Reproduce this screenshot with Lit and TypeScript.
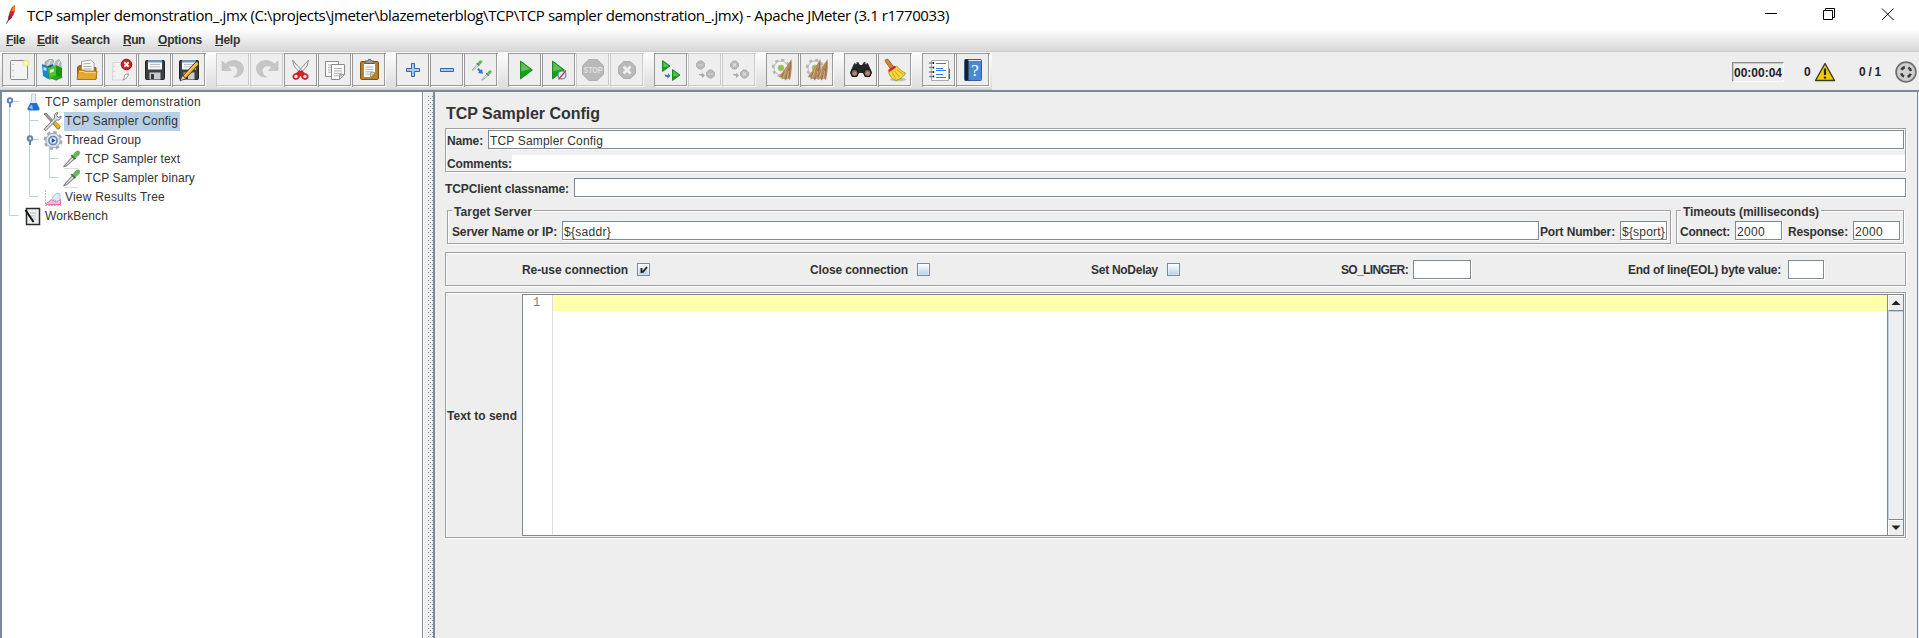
import { LitElement, html, css, svg } from "lit";
import { customElement, property } from "lit/decorators.js";

/* A label that spreads its letters to take up a given width. */
@customElement("fit-label")
class FitLabel extends LitElement {
  @property({ type: Number }) w = 0;
  static styles = css`
    :host { display: inline-block; white-space: pre; flex: none; }
    span { display: inline-block; white-space: pre; }
  `;
  render() {
    return html`<span><slot></slot></span>`;
  }
  firstUpdated() {
    const s = this.renderRoot.querySelector("span") as HTMLElement;
    const n = (this.textContent || "").length;
    const nat = s.getBoundingClientRect().width;
    if (n && nat) s.style.letterSpacing = `${(this.w - nat) / n}px`;
    this.style.width = `${this.w}px`;
  }
}

const page = (x: number, y: number, w: number, h: number) => svg`
  <path d="M${x} ${y}h${w}v${h - 5}l-5 5h${5 - w}z" fill="#fafafa" stroke="#8a8c88"/>
  <path d="M${x + w} ${y + h - 5}h-5v5z" fill="#ddd" stroke="#8a8c88" stroke-width=".8"/>`;
const lines = (x: number, y: number, w: number, n: number) =>
  svg`<path d="${Array.from({ length: n }, (_, i) => `M${x} ${y + i * 2.4}h${w}`).join("")}" stroke="#b0b0b0" fill="none"/>`;
const floppy = svg`
  <rect x="6.5" y="6.5" width="19" height="19" rx="1" fill="#3c3f44" stroke="#222"/>
  <rect x="9" y="6.5" width="14" height="9" fill="#f4f6f8"/>
  <rect x="9" y="6" width="14" height="2.4" fill="#6e93bd"/>
  <path d="M11 10.5h10M11 12.8h10" stroke="#b9bcc0"/>
  <rect x="10.5" y="18.5" width="11" height="7" fill="#c9cbcd"/>
  <rect x="12" y="20" width="3" height="5" fill="#34373b"/>`;
const octagon = (x: number, y: number, s: number) => {
  const a = s * 0.3;
  const b = s - 2 * a;
  return svg`<path d="M${x + a} ${y}h${b}l${a} ${a}v${b}l${-a} ${a}h${-b}l${-a} ${-a}v${-b}z" fill="#b9b9b9" stroke="#b0b0b0"/>`;
};
const tri = (x: number, y: number, w: number, h: number) =>
  svg`<path d="M${x} ${y}l${w} ${h / 2}l${-w} ${h / 2}z" fill="#14a314" stroke="#0d7a12" stroke-width=".8"/><path d="M${x + 0.8} ${y + 1.5}l${w * 0.75} ${h * 0.38}l${-w * 0.75} ${h * 0.1}z" fill="#5cc05c"/>`;
const gear = (cx: number, cy: number) => svg`
  <circle cx="${cx}" cy="${cy}" r="8" fill="none" stroke="#b4b6b3" stroke-width="2.4" stroke-dasharray="3.2 3.08"/>
  <circle cx="${cx}" cy="${cy}" r="7" fill="#f2f3f1" stroke="#b4b6b3"/>
  <circle cx="${cx}" cy="${cy}" r="3" fill="#8cc93a" stroke="#b6b8b5"/>`;
const brush = (x: number) => svg`
  <path d="M${x + 13} 5L${x + 7} 14L${x} 23l3 .5v2l2.500 -1l1.500 2l2-2l2.500 1.500l1-5l.8-7z" fill="#b38b5d"/>
  <path d="M${x + 9} 14L${x + 3} 23M${x + 11} 14L${x + 7} 25M${x + 12.5} 8L${x + 10.5} 23" stroke="#8f6b42" stroke-width=".8"/>
  <path d="M${x + 8} 14L${x + 5} 23M${x + 10} 17L${x + 9} 24" stroke="#dbbb8d" stroke-width=".8"/>`;
const dropper = (x: number, y: number, k: number) => svg`
  <g transform="translate(${x} ${y}) scale(${k})">
    <path d="M1 17L9.500 7.500l2.200 2.200L3 17.500L.5 18z" fill="#eceeec" stroke="#7c7f7c" stroke-width="1.100"/>
    <path d="M8.500 5.500l4.500 4.500" stroke="#2f7a2b" stroke-width="2"/>
    <path d="M10.500 6C12 3 14 .5 16.500 1.200C19 2.500 17 6 13 8.500z" fill="#6cb862" stroke="#4a9445" stroke-width=".7"/>
  </g>`;
const undo = svg`<path d="M5 7v9.500h9.500l-3.200-3.200c3.500-2.800 9-1.500 9.500 3c.3 3-1.500 5.500-4.500 6.700c5 .5 10-2.300 10.200-8.200C26.700 7.500 17 3 8.300 10z" fill="#c6c6c6" stroke="#bbb" stroke-width=".6"/>`;

const icons: Record<string, unknown> = {
  new: svg`<rect x="7.500" y="6.500" width="17" height="19" rx="1" fill="#f3f3f3" stroke="#8a8c88"/>
    <path d="M10 10v1M10 16v1M10 22v1" stroke="#999"/>
    <circle cx="23" cy="9" r="3.500" fill="#f5ec80" opacity=".75"/><circle cx="23" cy="9" r="1.700" fill="#fffde0"/>`,
  templates: svg`<path d="M8 8l4-2.500h4l1 3l5-3l2 3v8H8z" fill="#b9bebe" stroke="#8c9292" stroke-width=".7"/>
    <path d="M10 12l4-6M15 12l4-6M20 12l3-5" stroke="#e8ecec"/>
    <path d="M5 10l6 2v13l-5-3z" fill="#1689cf"/><path d="M11 12l5-2v12l-5 3z" fill="#0b5fa5"/>
    <path d="M6.500 13l3 1v3l-3-1z" fill="#bfe3f7"/>
    <path d="M11 14l8-3v12l-7 3z" fill="#4cc234"/><path d="M19 11l6 3v9l-6 3.500z" fill="#1f8f1c"/>
    <path d="M19 26.500L12 24l7-2.500l7 2z" fill="#2ba223"/><path d="M13 16l4-1.500v3l-4 1.500z" fill="#d7f3cd"/>`,
  open: svg`<path d="M6.500 25V13l2-1.500h5l1.500 2h10V25z" fill="#a87010" stroke="#8d5a08"/>
    <path d="M10.500 17V7.500l9-1.500l3.500 3v9z" fill="#f8f8f8" stroke="#8c8c8c" stroke-width=".8"/>
    <path d="M12.500 10l7-.8M12.500 12.500h8M12.500 15h8" stroke="#aaa"/>
    <path d="M6 25.500L7.500 16h5l2 1h11.500L25 25.500z" fill="#e5a82c" stroke="#a06c10" stroke-width=".8"/>
    <path d="M8 17.500h4.500l1.500 1h11" stroke="#f6d27a" fill="none"/>`,
  close: svg`<path d="M8 8.500h15v13l-4.500 4.500H7.500z" fill="#f3f3f3" stroke="#d6d6d6"/>
    <path d="M23.500 20c-2 0-4 .5-4 1.500c0 1.500-.5 3-1.500 4.500c3-1 5-3 5.500-6z" fill="#fafafa" stroke="#888" stroke-width=".8"/>
    <path d="M9 12v1M9 17v1M9 22v1" stroke="#bbb"/>
    <circle cx="21.500" cy="10.500" r="5.300" fill="#c8201c" stroke="#931210"/>
    <path d="M19.300 8.300l4.400 4.400M23.700 8.300l-4.400 4.400" stroke="#fff" stroke-width="2"/>`,
  save: floppy,
  saveas: svg`${floppy}<path d="M24.500 9L11 23.500" stroke="#403005" stroke-width="4.600"/><path d="M24.500 9L11.500 23" stroke="#f2b52e" stroke-width="3"/>
    <path d="M24 8.500L11.500 21.500" stroke="#fbe08c" stroke-width=".9"/><path d="M9.500 21.500l3.500 3L7 27z" fill="#e9cfa0" stroke="#333" stroke-width=".7"/>`,
  undo,
  redo: svg`<g transform="translate(32 0) scale(-1 1)">${undo}</g>`,
  cut: svg`<path d="M7.500 6L9 12l7 8l2-2zM23.500 6L22 12l-7 8l-2-2z" fill="#f3f3f3" stroke="#858585" stroke-width=".9"/>
    <path d="M14 17l3 0l3 2.500c4 0 4.500 6 0 6c-3 0-3.500-3-4.500-4.500c-1 1.500-1.500 4.500-4.500 4.500c-4.500 0-4-6 0-6z" fill="#d71f26" stroke="#a50e12" stroke-width=".6"/>
    <circle cx="11" cy="22.500" r="1.700" fill="#eee"/><circle cx="20" cy="22.500" r="1.700" fill="#eee"/>`,
  copy: svg`${page(6.5, 7.5, 13, 15)}${lines(9, 11, 8, 4)}${page(12.5, 10.5, 13, 15)}${lines(15, 14.5, 8, 4)}`,
  paste: svg`<rect x="7.500" y="7.500" width="18" height="18" rx="1.200" fill="#b97d2a" stroke="#80500c"/>
    ${page(10.5, 9.5, 12, 14)}${lines(12.5, 13, 8, 4)}<path d="M12 9.500V7h2.500l1-1.500h2l1 1.500H21v2.500z" fill="#999c97" stroke="#5b5d59"/>`,
  plus: svg`<path d="M14.500 9.500h3v5h5v3h-5v5h-3v-5h-5v-3h5z" fill="#a9c8ea" stroke="#3465a4"/>`,
  minus: svg`<path d="M9.500 14.500h13v3h-13z" fill="#a9c8ea" stroke="#3465a4"/>`,
  toggle: svg`${dropper(7, 6, 0.56)}${dropper(16.5, 16, 0.56)}<path d="M13.500 14l2.300 2.300l1.200-1.300l1 4.800l-5-.8l1.200-1.300l-2-2z" fill="#2b7ae0"/>`,
  play: tri(11.5, 7, 12, 18),
  playno: svg`${tri(9.5, 7, 12, 18)}<circle cx="19" cy="21" r="4" fill="#dfe8f5" stroke="#5e82b5" stroke-width="1.200"/><path d="M15.500 25.500L23 16.500" stroke="#d33" stroke-width="1.200"/>`,
  stop: svg`${octagon(5.5, 5.5, 21)}<text x="6.5" y="19.300" style="font:bold 9px 'Liberation Sans',sans-serif" textLength="19" lengthAdjust="spacingAndGlyphs" fill="#e2e2e2">STOP</text>`,
  shutdown: svg`${octagon(7.5, 7.5, 17)}<path d="M12.500 12.500l7 7M19.500 12.500l-7 7" stroke="#f0f0f0" stroke-width="2.800"/>`,
  rstart: svg`${tri(7.5, 6.5, 7.5, 11)}${tri(17.5, 15.5, 7.5, 11)}<path d="M9.500 20l2 1h1.500v-2l2.500 3l-3 2.500v-1.500h-2z" fill="#4a74bd"/>`,
  rstop: svg`${octagon(7.5, 7, 8)}${octagon(17.5, 16, 8)}<path d="M9 11h5M19 20h5" stroke="#ccc" stroke-width="1.500"/><path d="M10 20h3v-1.500l3 3l-3 2.500v-2l-3-1z" fill="#aaa"/>`,
  rshut: svg`${octagon(7.5, 7, 8)}${octagon(17.5, 16, 8)}<path d="M10 9.500l3 3M13 9.500l-3 3M20 18.500l3 3M23 18.500l-3 3" stroke="#ddd" stroke-width="1.300"/><path d="M10 20h3v-1.500l3 3l-3 2.500v-2l-3-1z" fill="#aaa"/>`,
  clear: svg`${gear(14, 14)}${brush(11.5)}`,
  clearall: svg`${gear(14, 14)}${brush(6.5)}${brush(13.5)}`,
  search: svg`<path d="M9 9.500l4-1.500l2 3h2l2-3l4 1.500l4 9l-2 4.500h-5l-2-4h-4l-2 4H7l-2-4.500z" fill="#262626"/>
    <path d="M10 10l2-1M22 10l-2-1" stroke="#aaa" stroke-width="1.300"/>
    <circle cx="9.500" cy="19" r="3.600" fill="#6b6b6b" stroke="#111"/><circle cx="22.500" cy="19" r="3.600" fill="#6b6b6b" stroke="#111"/>
    <circle cx="9.800" cy="19.500" r="1.900" fill="#c88464"/><circle cx="22.800" cy="19.500" r="1.900" fill="#c88464"/>`,
  broom: svg`<ellipse cx="19" cy="25.500" rx="8" ry="1.700" fill="#bbb"/>
    <path d="M6 7c0-2 3-2.500 4-.5l5 7l-3 2z" fill="#c98a3c" stroke="#8d5713" stroke-width=".8"/>
    <path d="M9.500 17.500l8-5.500C21 16 24 18 26.500 19l-1.500 2.500l-2 2l-2.500 1.500l-3.500 1.500c-4-2-6.500-4-7.500-9z" fill="#f2d63c" stroke="#a98c0c" stroke-width=".8"/>
    <path d="M13 18l4 7M15.500 17l5 6M18 15.500l6 5" stroke="#c2a118" stroke-width=".8"/>
    <path d="M9 16l6.500-4.500l1.500 2l-6.500 4.500z" fill="#d3232a"/>`,
  notes: svg`<path d="M25.500 14.500h1.500v5h-1.500z" fill="#1d7ff0"/><path d="M25.500 20h1.500v5h-1.500z" fill="#0c8c14"/>
    <path d="M8.500 6.500h17v20h-17z" fill="#fdfdfd" stroke="#aaa"/>
    <path d="M6 9h4M6 13.500h4M6 18h4M6 22.500h4" stroke="#888" stroke-width="1.600"/><path d="M10.500 8v2M10.500 12.500v2M10.500 17v2M10.500 21.500v2" stroke="#222" stroke-width="1.300"/>
    <path d="M13 9.500h10M13 14.500h7M13 16.500h10M13 20.500h7M13 23.500h10" stroke="#2a7ff0"/>`,
  help: svg`<rect x="7.500" y="5.500" width="17" height="21" rx="1" fill="#4a88d6" stroke="#345f9a"/><path d="M8 5.500h3.500v21H8z" fill="#1d1d1f"/>
    <path d="M11.500 6.500h12.500" stroke="#dde6f2"/><text x="18" y="22" text-anchor="middle" font-family="Liberation Serif" font-size="17" fill="#fff">?</text>`,
};

const tools: [string, boolean?][][] = [
  [["new"], ["templates"], ["open"], ["close"], ["save"], ["saveas"]],
  [["undo", true], ["redo", true], ["cut"], ["copy"], ["paste"]],
  [["plus"], ["minus"], ["toggle"]],
  [["play"], ["playno"], ["stop", true], ["shutdown", true]],
  [["rstart"], ["rstop", true], ["rshut", true]],
  [["clear"], ["clearall"]],
  [["search"], ["broom"]],
  [["notes"], ["help"]],
];

const menus: [string, boolean, number, number][] = [
  ["File", true, 19, 12],
  ["Edit", true, 21, 13],
  ["Search", false, 39, 13],
  ["Run", true, 22, 13],
  ["Options", true, 44, 13],
  ["Help", true, 25, 0],
];

const treeIcons: Record<string, unknown> = {
  flask: svg`<path d="M9.500 1h4v7l4 7.500q.5 2-1.500 2H7q-2 0-1.500-2L9.500 8z" fill="#e9eef4" stroke="#b9c0c9" stroke-width=".8"/>
    <path d="M8.300 10h6.400l2.600 5.500q.3 1.800-1.500 1.800H7.200q-1.800 0-1.500-1.800z" fill="#1c70cf"/><path d="M7 15q1.500-3 3-3.500l1 5z" fill="#8fc2f5"/>`,
  config: svg`<path d="M2 2l2-1l14 15l-2.500 1z" fill="#9a9d9e" stroke="#555" stroke-width=".6"/><path d="M10.500 10.500l2-2l6 5.500l-2.500 3.500z" fill="#e7b21c" stroke="#94700b" stroke-width=".6"/>
    <path d="M2 17.500L12.500 6c-.8-3 1-5.500 3.500-5.500L14.500 3.500l2 2l2.500-1.500c.5 3-2 4.700-4.500 4L4 18.500z" fill="#d6d8d9" stroke="#606364" stroke-width=".8"/>`,
  thread: svg`<circle cx="11" cy="9.500" r="8.300" fill="none" stroke="#a4a9b0" stroke-width="2.200" stroke-dasharray="3.600 2.920"/><circle cx="11" cy="9.500" r="7.200" fill="#dfe2e6" stroke="#a4a9b0"/>
    <circle cx="11" cy="9.500" r="4" fill="#eef2f7" stroke="#5a87bd" stroke-width="1.600"/><path d="M9.700 7l4 2.500l-4 2.500z" fill="#1d4f94"/>`,
  dropper: svg`${dropper(1.5, 0, 0.92)}<path d="M2 18.500h14" stroke="#ddd"/>`,
  results: svg`<path d="M3.500 2v15.500H19" stroke="#b9bec6" fill="none" stroke-dasharray="2 1"/><path d="M4.500 15.500l5-4l4 2l5-2v5h-14z" fill="#f6b6d3" stroke="#e0559a" stroke-width=".8"/>
    <path d="M10 10l4-4.500h4v6l-3 2z" fill="#dcebfa" stroke="#8fbcea" stroke-width=".8"/>`,
  bench: svg`<rect x="4.500" y="1.500" width="13" height="16" fill="#eceef0" stroke="#2c2c2c" stroke-width="1.500"/><path d="M8 6h6M8 9h6M8 12h6" stroke="#b8bdc2"/>
    <path d="M3.500 3L11.500 15" stroke="#111" stroke-width="2"/>`,
};

const tree: [string, number, string, number, boolean?][] = [
  ["TCP sampler demonstration", 0, "flask", 156],
  ["TCP Sampler Config", 1, "config", 113, true],
  ["Thread Group", 1, "thread", 76],
  ["TCP Sampler text", 2, "dropper", 95],
  ["TCP Sampler binary", 2, "dropper", 110],
  ["View Results Tree", 1, "results", 100],
  ["WorkBench", 0, "bench", 63],
];

@customElement("app-root")
class AppRoot extends LitElement {
  static styles = css`
    :host { display: block; height: 638px; overflow: hidden; background: #eee; color: #333; font: 12px/14px "Liberation Sans", Arial, sans-serif; }
    * { box-sizing: border-box; }
    svg { display: block; overflow: visible; flex: none; }
    .b { font-weight: bold; }
    .title { display: flex; align-items: center; height: 29px; background: #fff; color: #000; font: 15px/20px "Open Sans", sans-serif; }
    .title .feather { margin-left: 5px; margin-right: 6px; }
    .title .win { display: flex; margin-left: auto; }
    .menu { display: flex; height: 23px; padding: 4px 0 0 6px; background: linear-gradient(#fff, #dadada 92%); border-bottom: 1px solid #ccc; font-weight: bold; color: #333; }
    .menu u { text-decoration: none; border-bottom: 1px solid #333; display: inline-block; line-height: 12px; height: 12px; }
    .bar { display: flex; height: 38px; }
    .tools { display: flex; gap: 10px; width: 992px; padding: 1px 0 0 2px; background: linear-gradient(#fdfdfd, #dcdcdc); border-bottom: 1px solid #ccc; }
    .grp { display: flex; height: 34px; }
    .btn { width: 34px; height: 34px; background: #eee; border: 1px solid #999; border-right: 0; border-bottom: 0; box-shadow: inset -1px -1px #fff, inset -2px -2px #999; }
    .btn.off { border-color: #ccc; box-shadow: inset -1px -1px #f6f6f6, inset -2px -2px #ccc; }
    .status { display: flex; flex: 1; justify-content: flex-end; align-items: center; padding: 1px 2px 0 0; color: #222; }
    .timer { width: 52px; height: 20px; padding: 3px 0 0 1px; border: 1px solid; border-color: #8a8a8a #fff #fff #8a8a8a; box-shadow: inset 1px 1px #ccc; margin-right: 20px; line-height: 14px; }
    .main { display: flex; height: 548px; border-top: 2px solid #7a8a99; }
    .tree { width: 423px; padding-top: 1px; background: #fff; border-left: 2px solid #7a8a99; border-right: 1px solid #7a8a99; position: relative; }
    .row { display: flex; height: 19px; align-items: center; }
    .row.l0 { padding-left: 20px; } .row.l1 { padding-left: 40px; } .row.l2 { padding-left: 60px; }
    .row .name { height: 19px; line-height: 19px; padding: 0 1px; margin-left: 2px; display: flex; }
    .row .sel { background: #b8cfe5; padding-right: 2px; }
    .wires { position: absolute; left: 0; top: 0; }
    .split { width: 10px; border-left: 1px solid #fff; padding: 3px 0 0 3px; }
    .dots { width: 6px; height: 100%; background: radial-gradient(circle at 1.5px 1.5px, #7a8a99 .7px, transparent .8px) 0 0/4px 4px, radial-gradient(circle at 3.5px 3.5px, #7a8a99 .7px, transparent .8px) 0 0/4px 4px; }
    .panel { flex: 1; border-left: 2px solid #7a8a99; border-right: 1px solid #7a8a99; margin-right: 1px; padding: 12px 11px 0 10px; }
    h1 { margin: 0 0 0 1px; font-size: 16px; line-height: 20px; height: 24px; }
    .etch { border: 1px solid #a0a0a0; box-shadow: 1px 1px #fff, inset 1px 1px #fff; }
    .field { background: #fff; border: 1px solid #7a8a99; height: 19px; padding: 3px 0 0 1px; line-height: 14px; box-shadow: 1px 1px #fff, inset -1px -1px #fff; flex: none; white-space: nowrap; overflow: hidden; }
    .grow { flex: 1; }
    .line { display: flex; align-items: center; }
    .line > fit-label, .opts > fit-label, .send > fit-label { padding-top: 2px; }
    .names { height: 44px; padding: 1px 1px 0 1px; }
    .names .n { height: 19px; margin-bottom: 6px; }
    .comments { height: 16px; }
    .comments .w { background: #fff; flex: 1; height: 16px; margin-right: -1px; }
    .cls { margin-top: 6px; height: 19px; }
    .sets { display: flex; gap: 5px; padding: 0 2px; margin-top: 7px; }
    .set { position: relative; margin-top: 6px; height: 34px; padding: 10px 3px 0 4px; display: flex; align-items: flex-start; }
    .set.times { width: 228px; padding-left: 3px; }
    .set .line { width: 100%; }
    .legend { position: absolute; top: -6px; left: 6px; background: #eee; line-height: 15px; height: 14px; box-shadow: -2px 0 #eee, 2px 0 #eee; }
    .opts { height: 34px; margin-top: 8px; display: flex; align-items: center; padding-left: 76px; }
    .cb { width: 13px; height: 13px; border: 1px solid #7a8a99; background: linear-gradient(#fff, #b8cfe5); box-shadow: inset 0 0 0 1px rgba(255,255,255,.35); flex: none; }
    .send { height: 246px; margin-top: 6px; padding: 1px; display: flex; align-items: center; }
    .edit { align-self: flex-start; flex: 1; height: 242px; margin-left: 5px; background: #fff; border: 1px solid #7a8a99; display: flex; }
    .gut { width: 30px; border-right: 1px solid #ddd; color: #808080; font: 12px/15px "Liberation Mono", monospace; padding: 1px 0 0 10px; }
    .code { flex: 1; } .cur { height: 16px; background: #ffffaa; }
    .sb { width: 16px; border-left: 1px solid #7a8a99; background: #eee; display: flex; flex-direction: column; justify-content: space-between; }
    .arr { height: 16px; border-bottom: 1px solid #7a8a99; border-left: 1px solid #fff; border-top: 1px solid #fff; }
    .arr.dn { border-bottom: 0; border-top: 1px solid #7a8a99; box-shadow: inset 0 1px #fff; }
    .track { flex: 1; border-left: 1px solid #b8cfe5; border-top: 1px solid #b8cfe5; }
  `;

  lab(t: string, w: number, gap = 0) {
    return html`<fit-label class="b" .w=${w}>${t}</fit-label><svg width=${gap} height="1"></svg>`;
  }
  field(w: number, t = "", tw = 0) {
    return html`<div class="field ${w ? "" : "grow"}" style=${w ? `width:${w}px` : ""}>${t ? html`<fit-label .w=${tw}>${t}</fit-label>` : ""}</div>`;
  }

  render() {
    return html`
      <div class="title">
        <svg class="feather" width="16" height="22" viewBox="0 0 16 22"><path d="M1.500 19.500L5 13" stroke="#7a2a6a" fill="none"/><path d="M3 16.500C3.500 10 6 3 9.500 1q1.500 4-1 10q-2 4-5.500 5.500z" fill="#c4243c"/><path d="M6 7.500Q8 2 9.800.8Q10.800 3 9.800 7z" fill="#f08020"/><path d="M3 16.500q0-3 1.200-5.500l3 2.500q-2 2.500-4.200 3z" fill="#8a2560"/></svg>
        <fit-label .w=${922}>TCP sampler demonstration_.jmx (C:\\projects\\jmeter\\blazemeterblog\\TCP\\TCP sampler demonstration_.jmx) - Apache JMeter (3.1 r1770033)</fit-label>
        <svg class="win" width="154" height="29" viewBox="1765 0 154 29" fill="none" stroke="#000"><path d="M1765 13.500h12"/><path d="M1823.500 10.500h9v9h-9zM1825.500 10.500v-2h9v9h-2"/><path d="M1882 8.500l11.500 11.500M1893.500 8.500L1882 20"/></svg>
      </div>
      <div class="menu">
        ${menus.map(([t, m, w, g]) => html`<fit-label .w=${w}>${m ? html`<u>${t[0]}</u>${t.slice(1)}` : t}</fit-label><svg width=${g} height="1"></svg>`)}
      </div>
      <div class="bar">
        <div class="tools">
          ${tools.map((g) => html`<div class="grp">${g.map(([n, off]) => html`<div class="btn ${off ? "off" : ""}"><svg width="32" height="32" viewBox="0 0 32 32" fill="none">${icons[n]}</svg></div>`)}</div>`)}
        </div>
        <div class="status">
          <div class="timer b"><fit-label .w=${48}>00:00:04</fit-label></div>
          ${this.lab("0", 7, 3)}
          <svg width="22" height="20" viewBox="0 0 22 20"><path d="M11 1.500L20.500 18.500H1.500z" fill="#f7c800" stroke="#3a3a10" stroke-width="1.400" stroke-linejoin="round"/><path d="M11 6.500v6.500" stroke="#222" stroke-width="2.200"/><circle cx="11" cy="15.600" r="1.200" fill="#222"/></svg>
          <svg width="23" height="1"></svg>
          ${this.lab("0 / 1", 22, 14)}
          <svg width="22" height="22" viewBox="0 0 22 22"><circle cx="11" cy="11" r="10" fill="#b4b4b4" stroke="#6c6c6c" stroke-width="1.500"/><circle cx="11" cy="11" r="8.500" fill="#cfcfcf"/><circle cx="11" cy="11" r="5" fill="none" stroke="#3c3c3c" stroke-width="2.600" stroke-dasharray="4.200 3.654" stroke-dashoffset="-1.830"/></svg>
        </div>
      </div>
      <div class="main">
        <div class="tree">
          <svg class="wires" width="80" height="140" viewBox="2 92 80 140" fill="none" stroke="#b8cfe5"><path d="M9.500 105v110.500h9M12 101.500h7M29.500 111v85.500h9M29.500 120.500h9M32 139.500h7M49.500 149v28.500h9M49.500 158.500h9"/>
            <g stroke="#6382bf" stroke-width="2"><circle cx="10" cy="100.500" r="2.200"/><path d="M10 103v4"/><circle cx="30" cy="138.500" r="2.200"/><path d="M30 141v4"/></g></svg>
          ${tree.map(([t, l, ic, w, sel]) => html`<div class="row l${l}"><svg width="20" height="19" viewBox="0 0 20 19" fill="none">${treeIcons[ic]}</svg><div class="name ${sel ? "sel" : ""}"><fit-label .w=${w}>${t}</fit-label></div></div>`)}
        </div>
        <div class="split"><div class="dots"></div></div>
        <div class="panel">
          <h1><fit-label .w=${154}>TCP Sampler Config</fit-label></h1>
          <div class="etch names">
            <div class="line n">${this.lab("Name:", 36, 5)}${this.field(0, "TCP Sampler Config", 113)}</div>
            <div class="line comments">${this.lab("Comments:", 65)}<div class="w"></div></div>
          </div>
          <div class="line cls">${this.lab("TCPClient classname:", 124, 5)}${this.field(0)}</div>
          <div class="sets">
            <div class="set etch grow"><fit-label class="legend b" .w=${78}>Target Server</fit-label>
              <div class="line">${this.lab("Server Name or IP:", 105, 5)}${this.field(0, "${saddr}", 47)}<svg width="1" height="1"></svg>${this.lab("Port Number:", 75, 5)}${this.field(47, "${sport}", 43)}</div></div>
            <div class="set etch times"><fit-label class="legend b" .w=${136}>Timeouts (milliseconds)</fit-label>
              <div class="line">${this.lab("Connect:", 50, 5)}${this.field(47, "2000", 28)}<svg width="6" height="1"></svg>${this.lab("Response:", 60, 5)}${this.field(47, "2000", 28)}</div></div>
          </div>
          <div class="etch opts">
            ${this.lab("Re-use connection", 106, 9)}<div class="cb"><svg width="11" height="11" viewBox="0 0 11 11"><path d="M3.500 4v5M4.500 8.500L9 3" stroke="#222" stroke-width="1.900" fill="none"/></svg></div><svg width="160" height="1"></svg>
            ${this.lab("Close connection", 98, 9)}<div class="cb"></div><svg width="161" height="1"></svg>
            ${this.lab("Set NoDelay", 67, 9)}<div class="cb"></div><svg width="161" height="1"></svg>
            ${this.lab("SO_LINGER:", 67, 5)}${this.field(58)}<svg width="157" height="1"></svg>
            ${this.lab("End of line(EOL) byte value:", 153, 7)}${this.field(36)}
          </div>
          <div class="etch send">
            ${this.lab("Text to send", 70)}
            <div class="edit"><div class="gut">1</div><div class="code"><div class="cur"></div></div>
              <div class="sb"><div class="arr"><svg width="14" height="14" viewBox="0 0 14 14"><path d="M2.500 9h9L7 4.500z" fill="#222"/></svg></div><div class="track"></div><div class="arr dn"><svg width="14" height="14" viewBox="0 0 14 14"><path d="M2.500 5.500h9L7 10z" fill="#222"/></svg></div></div></div>
          </div>
        </div>
      </div>`;
  }
}
